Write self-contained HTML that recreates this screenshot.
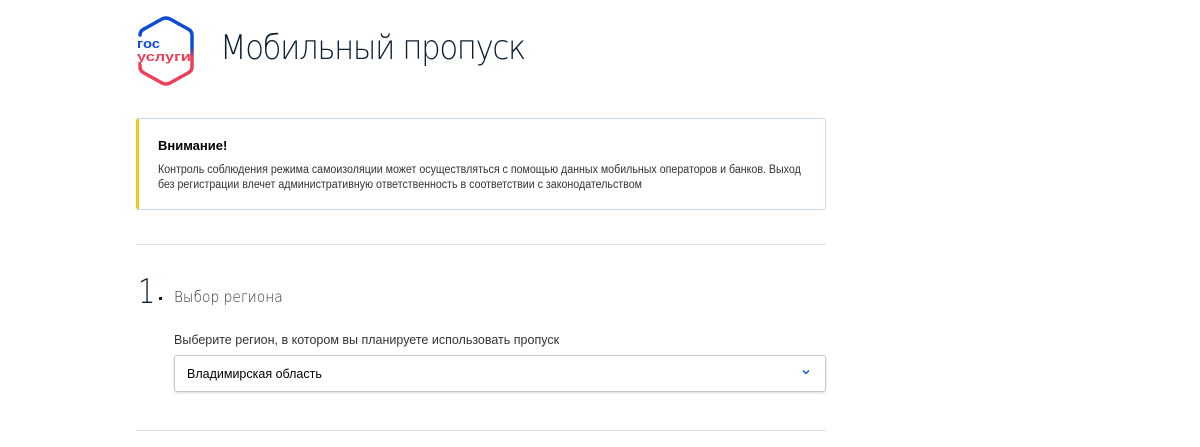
<!DOCTYPE html>
<html><head><meta charset="utf-8"><style>
body{margin:0;width:1200px;height:447px;background:#fff;font-family:"Liberation Sans",sans-serif;position:relative;overflow:hidden;color:#0b1f33}
.a{position:absolute}
</style></head><body>
<svg class="a" style="left:134px;top:15px" width="64" height="72" viewBox="0 0 64 72">
<defs><linearGradient id="g" x1="0" y1="0" x2="0" y2="1"><stop offset="0.45" stop-color="#0d4cd3"/><stop offset="0.6" stop-color="#ee3f58"/></linearGradient></defs>
<path d="M6 20 Q6 16 10 14 L28 4 Q32 2 36 4 L54 14 Q58 16 58 20 L58 52 Q58 56 54 58 L36 68 Q32 70 28 68 L10 58 Q6 56 6 52 L6 50" fill="none" stroke="url(#g)" stroke-width="3.5" stroke-linecap="round"/>
<text x="3" y="33" font-family="Liberation Sans,sans-serif" font-weight="bold" font-size="13" fill="#0d4cd3" textLength="23" lengthAdjust="spacingAndGlyphs">гос</text>
<text x="3" y="46" font-family="Liberation Sans,sans-serif" font-weight="bold" font-size="13" fill="#ee3f58" textLength="54" lengthAdjust="spacingAndGlyphs">услуги</text>
</svg>
<div class="a" style="left:220px;top:28px;font-size:34px;font-weight:300;font-family:'DejaVu Sans','Liberation Sans',sans-serif;letter-spacing:-1.5px;color:#0b1f33;transform:scaleX(0.905);transform-origin:left">Мобильный пропуск</div>
<div class="a" style="left:136px;top:118px;width:686px;height:90px;border:1px solid #c9d8ef;border-left:3px solid #f8c518;border-radius:3px"></div>
<div class="a" style="left:158px;top:138px;font-size:13px;font-weight:bold;color:#000">Внимание!</div>
<div class="a" style="left:158px;top:163px;font-size:11.5px;line-height:15px;color:#333;white-space:nowrap;transform:scaleX(0.926);transform-origin:left">Контроль соблюдения режима самоизоляции может осуществляться с помощью данных мобильных операторов и банков. Выход<br>без регистрации влечет административную ответственность в соответствии с законодательством</div>
<div class="a" style="left:136px;top:244px;width:690px;height:1px;background:#dde2e8"></div>
<div class="a" style="left:138px;top:272px;font-size:34px;font-weight:300;font-family:'DejaVu Sans',sans-serif;color:#0b1f33;transform:scaleX(0.8);transform-origin:left">1</div>
<div class="a" style="left:159px;top:297px;width:3px;height:3px;background:#0b1f33"></div>
<div class="a" style="left:174px;top:288px;font-size:15px;color:#333;font-family:'DejaVu Sans',sans-serif;font-weight:300;transform:scaleX(0.92);transform-origin:left">Выбор региона</div>
<div class="a" style="left:174px;top:333px;font-size:12.5px;color:#333">Выберите регион, в котором вы планируете использовать пропуск</div>
<div class="a" style="left:174px;top:355px;width:650px;height:35px;border:1px solid #c4c9d0;border-radius:3px;box-shadow:0 1px 2px rgba(0,0,0,.15)"></div>
<div class="a" style="left:187px;top:367px;font-size:12.5px;color:#000">Владимирская область</div>
<svg class="a" style="left:802px;top:369px" width="8" height="6" viewBox="0 0 8 6"><path d="M1 1.5 L4 4.5 L7 1.5" fill="none" stroke="#0d4cd3" stroke-width="1.4"/></svg>
<div class="a" style="left:136px;top:430px;width:690px;height:1px;background:#dde2e8"></div>
</body></html>
